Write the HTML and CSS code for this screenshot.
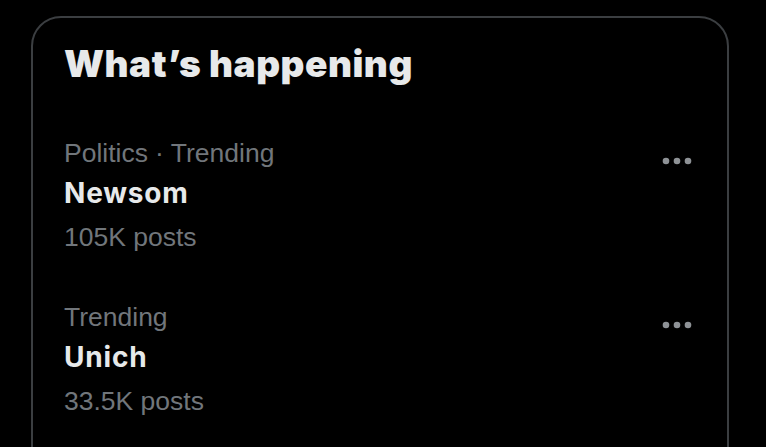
FILE: index.html
```html
<!DOCTYPE html>
<html lang="en">
<head>
<meta charset="utf-8">
<title>What’s happening</title>
<link rel="stylesheet" href="styles.css">
</head>
<body>
<aside class="card">
  <h2 class="title">What’s happening</h2>
  <div class="trend">
    <div class="trend-body">
      <div class="meta"><span>Politics</span><span class="sep">·</span><span>Trending</span></div>
      <div class="name">Newsom</div>
      <div class="count">105K posts</div>
    </div>
    <button class="more" aria-label="More">
      <svg viewBox="0 0 40 40" width="40" height="40"><circle cx="9" cy="20" r="3.3"/><circle cx="20" cy="20" r="3.3"/><circle cx="31" cy="20" r="3.3"/></svg>
    </button>
  </div>
  <div class="trend">
    <div class="trend-body">
      <div class="meta"><span>Trending</span></div>
      <div class="name">Unich</div>
      <div class="count">33.5K posts</div>
    </div>
    <button class="more" aria-label="More">
      <svg viewBox="0 0 40 40" width="40" height="40"><circle cx="9" cy="20" r="3.3"/><circle cx="20" cy="20" r="3.3"/><circle cx="31" cy="20" r="3.3"/></svg>
    </button>
  </div>
</aside>
</body>
</html>
```
FILE: styles.css
```css
html, body {
  margin: 0;
  padding: 0;
  background: #000;
  overflow: hidden;
  height: 100%;
}
body {
  padding: 16px 0 0 31px;
  box-sizing: border-box;
  font-family: "Liberation Sans", Arial, sans-serif;
}
.card {
  width: 698px;
  min-height: 640px;
  box-sizing: border-box;
  border: 2px solid #3b3e41;
  border-radius: 30px;
  padding-top: 21px;
}
.title {
  margin: 0;
  padding: 0 0 24px 31px;
  font-family: Inter, "Liberation Sans", sans-serif;
  font-weight: 900;
  font-size: 37px;
  line-height: 49px;
  color: #e7e9ea;
  letter-spacing: 0.5px;
  white-space: nowrap;
}
.trend {
  display: flex;
  align-items: flex-start;
  justify-content: space-between;
  padding: 24px 30px 22px 31px;
}
.trend-body {
  display: flex;
  flex-direction: column;
}
.meta, .count {
  font-size: 26.5px;
  line-height: 34px;
  color: #71767b;
  white-space: nowrap;
}
.sep {
  margin: 0 7px;
}
.name {
  margin-top: 3px;
  font-family: Inter, "Liberation Sans", sans-serif;
  font-weight: 700;
  font-size: 28px;
  line-height: 40px;
  letter-spacing: 0.8px;
  color: #e7e9ea;
}
.count {
  margin-top: 7px;
}
.more {
  margin-top: 5px;
  padding: 0;
  border: 0;
  background: none;
  width: 40px;
  height: 40px;
  display: flex;
}
.more svg {
  fill: #8e9296;
}
```
